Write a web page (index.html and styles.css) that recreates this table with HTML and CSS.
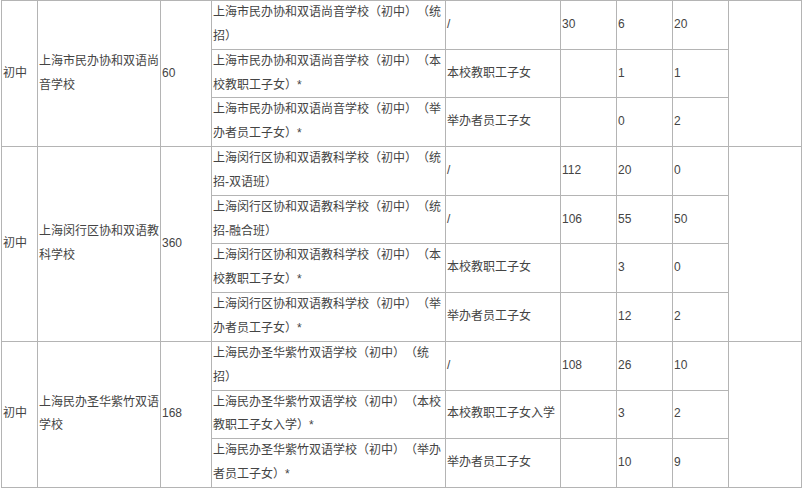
FILE: index.html
```html
<!DOCTYPE html>
<html lang="zh-CN">
<head>
<meta charset="utf-8">
<link rel="stylesheet" href="styles.css">
</head>
<body>
<table class="enrol">
  <colgroup>
    <col class="c-level"><col class="c-school"><col class="c-total"><col class="c-name"><col class="c-type"><col class="c-num"><col class="c-num"><col class="c-num"><col class="c-note">
  </colgroup>
  <tbody>
    <tr>
      <td rowspan="3">初中</td>
      <td rowspan="3">上海市民办协和双语尚音学校</td>
      <td rowspan="3">60</td>
      <td>上海市民办协和双语尚音学校（初中）（统招）</td>
      <td>/</td>
      <td>30</td>
      <td>6</td>
      <td>20</td>
      <td rowspan="3"></td>
    </tr>
    <tr>
      <td>上海市民办协和双语尚音学校（初中）（本校教职工子女）*</td>
      <td>本校教职工子女</td>
      <td></td>
      <td>1</td>
      <td>1</td>
    </tr>
    <tr>
      <td>上海市民办协和双语尚音学校（初中）（举办者员工子女）*</td>
      <td>举办者员工子女</td>
      <td></td>
      <td>0</td>
      <td>2</td>
    </tr>
    <tr>
      <td rowspan="4">初中</td>
      <td rowspan="4">上海闵行区协和双语教科学校</td>
      <td rowspan="4">360</td>
      <td>上海闵行区协和双语教科学校（初中）（统招-双语班）</td>
      <td>/</td>
      <td>112</td>
      <td>20</td>
      <td>0</td>
      <td rowspan="4"></td>
    </tr>
    <tr>
      <td>上海闵行区协和双语教科学校（初中）（统招-融合班）</td>
      <td>/</td>
      <td>106</td>
      <td>55</td>
      <td>50</td>
    </tr>
    <tr>
      <td>上海闵行区协和双语教科学校（初中）（本校教职工子女）*</td>
      <td>本校教职工子女</td>
      <td></td>
      <td>3</td>
      <td>0</td>
    </tr>
    <tr>
      <td>上海闵行区协和双语教科学校（初中）（举办者员工子女）*</td>
      <td>举办者员工子女</td>
      <td></td>
      <td>12</td>
      <td>2</td>
    </tr>
    <tr>
      <td rowspan="3">初中</td>
      <td rowspan="3">上海民办圣华紫竹双语学校</td>
      <td rowspan="3">168</td>
      <td>上海民办圣华紫竹双语学校（初中）（统招）</td>
      <td>/</td>
      <td>108</td>
      <td>26</td>
      <td>10</td>
      <td rowspan="3"></td>
    </tr>
    <tr>
      <td>上海民办圣华紫竹双语学校（初中）（本校教职工子女入学）*</td>
      <td>本校教职工子女入学</td>
      <td></td>
      <td>3</td>
      <td>2</td>
    </tr>
    <tr>
      <td>上海民办圣华紫竹双语学校（初中）（举办者员工子女）*</td>
      <td>举办者员工子女</td>
      <td></td>
      <td>10</td>
      <td>9</td>
    </tr>
  </tbody>
</table>
</body>
</html>
```
FILE: styles.css
```css
html, body {
  margin: 0;
  padding: 0;
  background: #fff;
}
body {
  padding-left: 1px;
}
.enrol {
  border-collapse: collapse;
  table-layout: fixed;
  width: 800px;
  font-family: "Liberation Sans", "Noto Sans CJK SC", sans-serif;
  font-size: 12px;
  color: #444;
  text-spacing-trim: space-all;
}
.enrol td {
  border: 1px solid #b4b4b4;
  padding: 0 0 0 1px;
  line-height: 23.85px;
  vertical-align: middle;
  text-align: left;
  word-break: break-all;
}
.c-level { width: 36px; }
.c-school { width: 123px; }
.c-total { width: 51px; }
.c-name { width: 234px; }
.c-type { width: 115px; }
.c-num { width: 56px; }
.c-note { width: 73px; }
```
